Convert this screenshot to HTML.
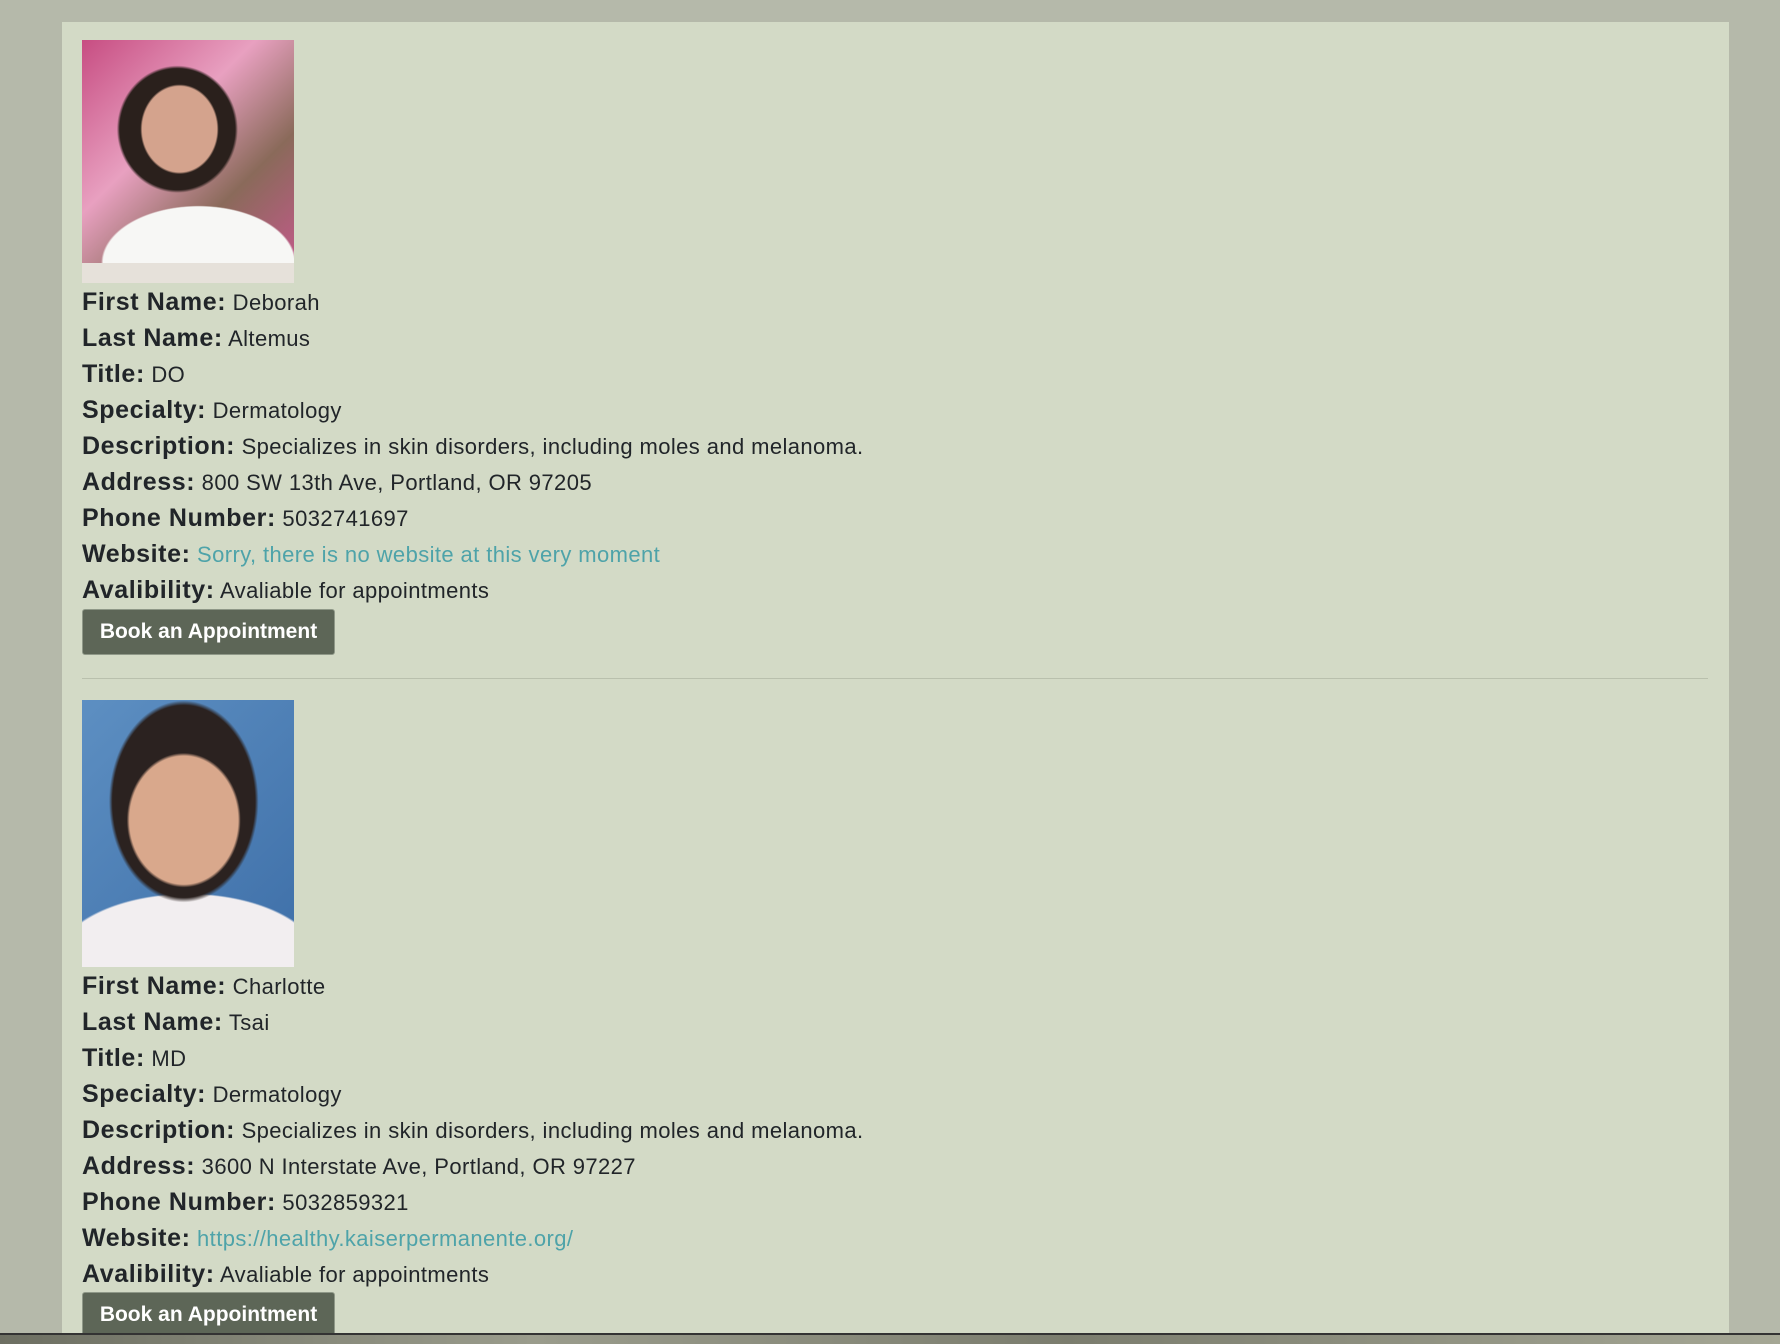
<!DOCTYPE html>
<html><head><meta charset="utf-8"><style>
html,body{margin:0;padding:0;}
body{width:1780px;height:1342px;overflow:hidden;background:#b5b9aa;position:relative;font-family:"Liberation Sans",sans-serif;color:#212529;}
.panel{position:absolute;left:62px;top:22px;width:1667px;height:1311px;background:#d3dac6;}
.bottom{position:absolute;left:0;top:1333px;width:1780px;height:9px;background:linear-gradient(90deg,#6d6f62,#9a9c8c 30%,#7b7d6e 60%,#a5a795);border-top:2px solid #333;}
.row{position:absolute;left:82px;height:36px;line-height:36px;white-space:nowrap;font-size:22px;letter-spacing:0.4px;}
.row b{font-size:25px;letter-spacing:0.6px;}
.link{color:#4ea3a9;}
.btn{position:absolute;left:82px;width:251px;height:44px;background:#5d6657;border:1px solid #8f9888;border-radius:3px;color:#fff;font-weight:bold;font-size:21px;line-height:44px;text-align:center;}
.sep{position:absolute;left:82px;top:678px;width:1626px;height:1px;background:#b9c0ad;}
.p1{position:absolute;left:82px;top:40px;width:212px;height:243px;background:#e6e1da;overflow:hidden;}
.p2{position:absolute;left:82px;top:700px;width:212px;height:267px;overflow:hidden;background:radial-gradient(ellipse 32% 30% at 48% 45%,#d9a88c 0 80%,transparent 84%),radial-gradient(ellipse 42% 45% at 48% 38%,#2b2220 0 80%,transparent 84%),radial-gradient(ellipse 70% 30% at 50% 100%,#f2eef0 0 90%,transparent 92%),linear-gradient(135deg,#5d8fc2,#3e6fa8);}
</style></head><body>
<div class="panel"></div>
<div class="p1"><div style="position:absolute;left:0;top:0;width:212px;height:223px;background:radial-gradient(ellipse 22% 24% at 46% 40%,#d4a38d 0 80%,transparent 84%),radial-gradient(ellipse 34% 34% at 45% 40%,#2a201c 0 80%,transparent 84%),radial-gradient(ellipse 50% 28% at 55% 100%,#f7f7f5 0 90%,transparent 92%),linear-gradient(135deg,#c74d82,#e8a0c0 40%,#8a6a5a 70%,#c05a88);"></div></div>
<div class="p2"></div>

<div class="row" style="top:284px"><b>First Name:</b> Deborah</div>
<div class="row" style="top:320px"><b>Last Name:</b> Altemus</div>
<div class="row" style="top:356px"><b>Title:</b> DO</div>
<div class="row" style="top:392px"><b>Specialty:</b> Dermatology</div>
<div class="row" style="top:428px"><b>Description:</b> Specializes in skin disorders, including moles and melanoma.</div>
<div class="row" style="top:464px"><b>Address:</b> 800 SW 13th Ave, Portland, OR 97205</div>
<div class="row" style="top:500px"><b>Phone Number:</b> 5032741697</div>
<div class="row" style="top:536px"><b>Website:</b> <span class="link">Sorry, there is no website at this very moment</span></div>
<div class="row" style="top:572px"><b>Avalibility:</b> Avaliable for appointments</div>
<div class="btn" style="top:609px">Book an Appointment</div>
<div class="sep"></div>

<div class="row" style="top:968px"><b>First Name:</b> Charlotte</div>
<div class="row" style="top:1004px"><b>Last Name:</b> Tsai</div>
<div class="row" style="top:1040px"><b>Title:</b> MD</div>
<div class="row" style="top:1076px"><b>Specialty:</b> Dermatology</div>
<div class="row" style="top:1112px"><b>Description:</b> Specializes in skin disorders, including moles and melanoma.</div>
<div class="row" style="top:1148px"><b>Address:</b> 3600 N Interstate Ave, Portland, OR 97227</div>
<div class="row" style="top:1184px"><b>Phone Number:</b> 5032859321</div>
<div class="row" style="top:1220px"><b>Website:</b> <span class="link">https://healthy.kaiserpermanente.org/</span></div>
<div class="row" style="top:1256px"><b>Avalibility:</b> Avaliable for appointments</div>
<div class="btn" style="top:1292px">Book an Appointment</div>
<div class="bottom"></div>
</body></html>
